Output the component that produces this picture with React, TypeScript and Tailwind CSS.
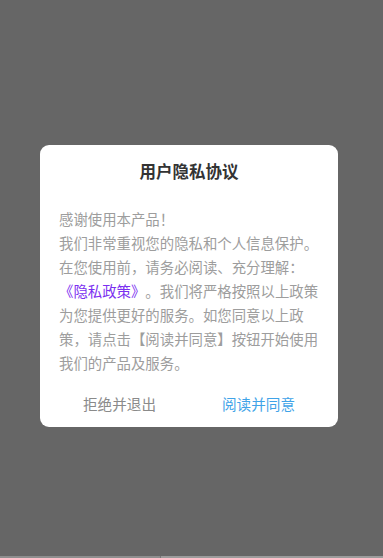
export default function App() {
  return (
    <div
      className="flex h-[558px] w-full flex-col bg-[#666666]"
      style={{ fontFamily: '"Noto Sans CJK SC", "Noto Sans", sans-serif' }}
    >
      <div className="px-[40px] pt-[145px]">
        <div className="w-[298px] rounded-[9px] bg-white">
          <h2 className="pt-[14px] text-center text-[16.5px] leading-[24px] font-bold text-[#333333]">
            用户隐私协议
          </h2>
          <div className="mt-[24px] px-[19px] text-[14.4px] leading-[24px] text-[#9d9d9d] [text-spacing-trim:space-all]">
            <p>感谢使用本产品！</p>
            <p>我们非常重视您的隐私和个人信息保护。</p>
            <p>在您使用前，请务必阅读、充分理解：</p>
            <p>
              <span className="text-[#7b2ff0]">《隐私政策》</span>
              。我们将严格按照以上政策为您提供更好的服务。如您同意以上政策，请点击【阅读并同意】按钮开始使用我们的产品及服务。
            </p>
          </div>
          <div className="mt-[6px] grid h-[46px] grid-cols-2 px-[10px] text-[14.6px] [text-spacing-trim:space-all]">
            <button className="flex items-center justify-center text-[#8a8a8a]">拒绝并退出</button>
            <button className="flex items-center justify-center text-[#3fa3e8]">阅读并同意</button>
          </div>
        </div>
      </div>
      <div className="mt-auto flex h-[2px]">
        <div className="w-[160px] bg-[#8e8e8e]" />
        <div className="w-px bg-[#777777]" />
        <div className="flex-1 bg-[#9c9c9c]" />
      </div>
    </div>
  );
}
